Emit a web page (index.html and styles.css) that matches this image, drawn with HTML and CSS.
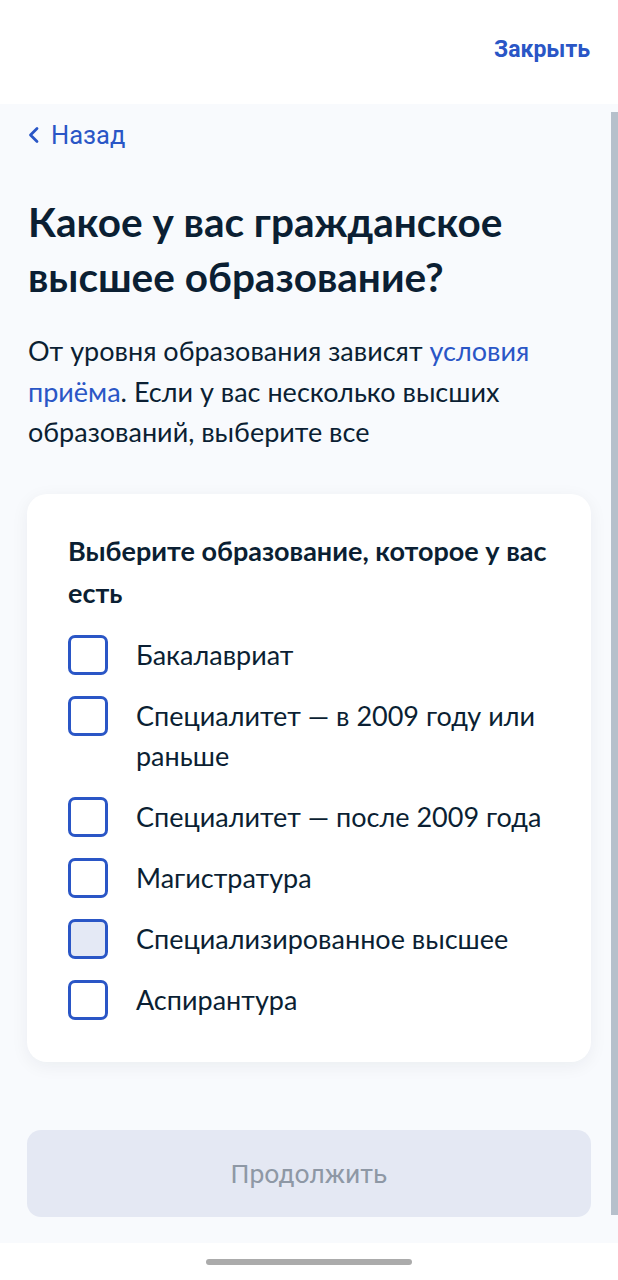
FILE: index.html
```html
<!DOCTYPE html>
<html lang="ru">
<head>
<meta charset="utf-8">
<link rel="stylesheet" href="styles.css">
</head>
<body>
<div class="page">
  <header class="topbar">
    <span class="close">Закрыть</span>
  </header>
  <main class="main">
    <div class="scrollbar"></div>
    <a class="back">
      <svg class="chev" width="13" height="18" viewBox="0 0 13 18"><path d="M10 2.5 L3.5 9 L10 15.5" fill="none" stroke="#2a56c6" stroke-width="2.8" stroke-linecap="round" stroke-linejoin="round"/></svg>
      <span>Назад</span>
    </a>
    <h1 class="title">Какое у вас гражданское высшее образование?</h1>
    <p class="lead">От уровня образования зависят <span class="link">условия приёма</span>. Если у вас несколько высших образований, выберите все</p>
    <section class="card">
      <div class="card-title">Выберите образование, которое у вас есть</div>
      <ul class="options">
        <li class="option"><span class="box"></span><span class="label">Бакалавриат</span></li>
        <li class="option"><span class="box"></span><span class="label">Специалитет — в 2009 году или раньше</span></li>
        <li class="option"><span class="box"></span><span class="label">Специалитет — после 2009 года</span></li>
        <li class="option"><span class="box"></span><span class="label">Магистратура</span></li>
        <li class="option"><span class="box box-hover"></span><span class="label">Специализированное высшее</span></li>
        <li class="option"><span class="box"></span><span class="label">Аспирантура</span></li>
      </ul>
    </section>
    <div class="spacer"></div>
    <button class="continue">Продолжить</button>
  </main>
  <footer class="home">
    <span class="indicator"></span>
  </footer>
</div>
</body>
</html>
```

FILE: styles.css
```css
* { box-sizing: border-box; }
html, body { margin: 0; padding: 0; }
body {
  background: #ffffff;
  font-family: Lato, "Noto Sans", sans-serif;
  color: #0b1f33;
}
.page {
  width: 618px;
  height: 1280px;
  display: flex;
  flex-direction: column;
  overflow: hidden;
}
.topbar {
  height: 104px;
  flex: none;
  background: #ffffff;
  display: flex;
  justify-content: flex-end;
  align-items: flex-start;
  padding: 35px 28px 0 0;
}
.close {
  font-family: Roboto, "Liberation Sans", sans-serif;
  font-weight: 700;
  font-size: 23px;
  line-height: 30px;
  color: #2a56c6;
}
.main {
  position: relative;
  flex: 1;
  background: #f8fafd;
  padding: 16px 27px 26px 27px;
  display: flex;
  flex-direction: column;
}
.scrollbar {
  position: absolute;
  right: 0;
  top: 8px;
  width: 7px;
  height: 1103px;
  background: #b6c0cb;
}
.back {
  display: flex;
  align-items: center;
  gap: 11px;
  height: 30px;
  padding-left: 0;
  font-family: Roboto, "Liberation Sans", sans-serif;
  font-size: 25.5px;
  color: #2a56c6;
}
.chev { display: block; }
.title {
  margin: 44px 0 0 1px;
  font-size: 40.5px;
  line-height: 55px;
  font-weight: 700;
  color: #0b1f33;
}
.lead {
  margin: 27px 0 0 1px;
  font-size: 27px;
  line-height: 40.5px;
  color: #0b1f33;
}
.link { color: #2a56c6; }
.card {
  margin-top: 41px;
  background: #ffffff;
  border-radius: 20px;
  box-shadow: 0 4px 18px rgba(11, 31, 51, 0.06);
  padding: 36px 34px 42px 41px;
}
.card-title {
  font-size: 27px;
  line-height: 42px;
  font-weight: 700;
}
.options {
  list-style: none;
  margin: 21px 0 0 0;
  padding: 0;
  display: flex;
  flex-direction: column;
  gap: 21px;
}
.option {
  display: flex;
  align-items: flex-start;
  gap: 28px;
}
.box {
  flex: none;
  width: 40px;
  height: 40px;
  border: 3px solid #2a56c6;
  border-radius: 7px;
  background: #ffffff;
}
.box-hover { background: #e4e9f5; }
.label {
  font-size: 27px;
  line-height: 40px;
}
.spacer { flex: 1; }
.continue {
  height: 87px;
  border: none;
  border-radius: 14px;
  background: #e4e8f3;
  color: #8e98a5;
  font-family: Roboto, "Liberation Sans", sans-serif;
  font-size: 26.5px;
}
.home {
  height: 37px;
  flex: none;
  background: #ffffff;
  display: flex;
  justify-content: center;
  padding-top: 16px;
}
.indicator {
  width: 206px;
  height: 6px;
  border-radius: 3px;
  background: #ababab;
}
```
